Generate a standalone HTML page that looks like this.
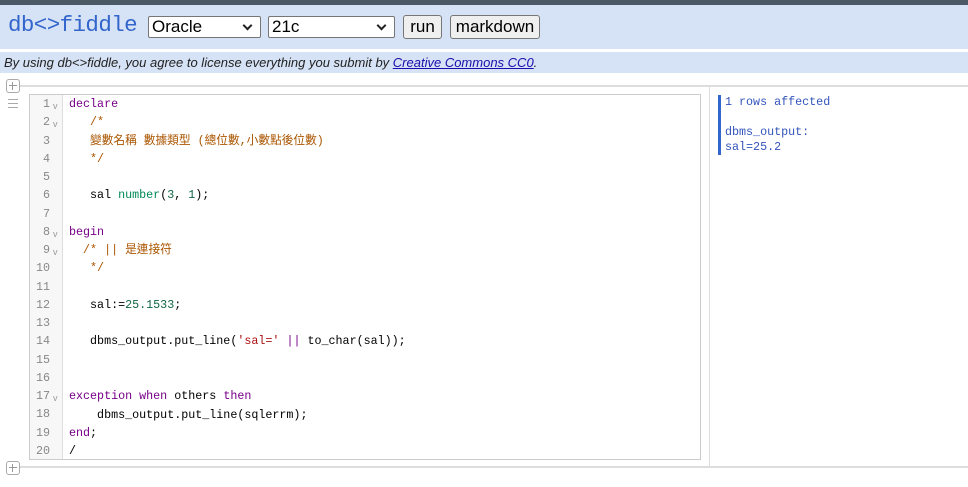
<!DOCTYPE html>
<html><head><meta charset="utf-8"><style>
body{margin:0;width:968px;height:487px;background:#fff;font-family:"Liberation Sans",sans-serif;position:relative;overflow:hidden}
.top{position:absolute;left:0;top:0;width:968px;height:5px;background:#4b5966}
.hdr{position:absolute;left:0;top:5px;width:968px;height:44px;background:#d6e2f5}
.logo{position:absolute;left:8px;top:12px;font-family:"Liberation Mono",monospace;font-size:22.5px;color:#3366cc;letter-spacing:-0.6px}
.sel{position:absolute;top:16px;height:22px;border:1px solid #767676;background:#fff;font-size:17px;box-sizing:border-box;padding-left:3px;line-height:20px;color:#000;border-radius:2px}
.sel:after{content:"";position:absolute;right:9px;top:5px;width:5px;height:5px;border-right:2px solid #222;border-bottom:2px solid #222;transform:rotate(45deg)}
.btn{position:absolute;top:15px;height:24px;border:1px solid #767676;background:#efefef;border-radius:3px;font-size:17px;line-height:22px;text-align:center;box-sizing:border-box;color:#000}
.note{position:absolute;left:0;top:52px;width:968px;height:21px;background:#d6e2f5;font-size:13px;font-style:italic;line-height:21px;padding-left:4px;color:#222;box-sizing:border-box}
.note a{color:#1a0dab;text-decoration:underline}
.hl{position:absolute;left:20px;height:2px;background:#ddd}
.plus{position:absolute;left:6px;width:12px;height:12px;border:1px solid #aaa;border-radius:3px;color:#999}
.plus:before{content:"";position:absolute;left:2px;top:5px;width:8px;height:1px;background:#999}
.plus:after{content:"";position:absolute;left:5px;top:2px;width:1px;height:8px;background:#999}
.ham{position:absolute;left:8px;top:99px;width:10px}
.ham i{display:block;height:1px;background:#aaa;margin-bottom:3px}
.ed{position:absolute;left:29px;top:94px;width:672px;height:366px;border:1px solid #ccc;box-sizing:border-box}
.gut{position:absolute;left:0;top:0;width:32px;height:100%;background:#f7f7f7;border-right:1px solid #ddd}
.code{position:absolute;left:0;top:0;font-family:"Liberation Mono","Noto Sans CJK TC",monospace;font-size:11.7px;line-height:18.26px;white-space:pre}
.ln{position:absolute;left:0;width:20px;text-align:right;color:#888;font-family:"Liberation Mono",monospace;font-size:11.7px;line-height:18.26px}
.fd{position:absolute;left:23px;color:#999;font-size:9px;line-height:22px}
.k{color:#708}.c{color:#a50}.n{color:#164}.t{color:#085}.s{color:#a11}.o{color:#708}
.vr{position:absolute;left:709px;top:87px;width:1px;height:380px;background:#ddd}
.out{position:absolute;left:718px;top:95px;border-left:3px solid #3366cc;padding-left:4px;font-family:"Liberation Mono",monospace;font-size:11.7px;line-height:15px;color:#3355bb;white-space:pre}
</style></head><body>
<div class="top"></div>
<div class="hdr"></div>
<div class="logo">db&lt;&gt;fiddle</div>
<div class="sel" style="left:148px;width:113px">Oracle</div>
<div class="sel" style="left:268px;width:127px">21c</div>
<div class="btn" style="left:403px;width:39px">run</div>
<div class="btn" style="left:450px;width:90px">markdown</div>
<div class="note">By using db&lt;&gt;fiddle, you agree to license everything you submit by <a>Creative Commons CC0</a>.</div>
<div class="plus" style="top:79px"></div>
<div class="hl" style="top:85px;width:948px"></div>
<div class="ham"><i></i><i></i><i></i></div>
<div class="ed">
<div class="gut">
<div class="ln" style="top:0">1</div><div class="fd" style="top:0">v</div>
<div class="ln" style="top:18.26px">2</div><div class="fd" style="top:18.26px">v</div>
<div class="ln" style="top:36.52px">3</div>
<div class="ln" style="top:54.78px">4</div>
<div class="ln" style="top:73.04px">5</div>
<div class="ln" style="top:91.3px">6</div>
<div class="ln" style="top:109.56px">7</div>
<div class="ln" style="top:127.82px">8</div><div class="fd" style="top:127.82px">v</div>
<div class="ln" style="top:146.08px">9</div><div class="fd" style="top:146.08px">v</div>
<div class="ln" style="top:164.34px">10</div>
<div class="ln" style="top:182.6px">11</div>
<div class="ln" style="top:200.86px">12</div>
<div class="ln" style="top:219.12px">13</div>
<div class="ln" style="top:237.38px">14</div>
<div class="ln" style="top:255.64px">15</div>
<div class="ln" style="top:273.9px">16</div>
<div class="ln" style="top:292.16px">17</div><div class="fd" style="top:292.16px">v</div>
<div class="ln" style="top:310.42px">18</div>
<div class="ln" style="top:328.68px">19</div>
<div class="ln" style="top:346.94px">20</div>
</div>
<div class="code" style="left:39px"><span class="k">declare</span>
   <span class="c">/*</span>
   <span class="c">變數名稱 數據類型 (總位數,小數點後位數)</span>
   <span class="c">*/</span>

   sal <span class="t">number</span>(<span class="n">3</span>, <span class="n">1</span>);

<span class="k">begin</span>
  <span class="c">/* || 是連接符</span>
  <span class="c"> */</span>

   sal:=<span class="n">25.1533</span>;

   dbms_output.put_line(<span class="s">'sal='</span> <span class="o">||</span> to_char(sal));


<span class="k">exception</span> <span class="k">when</span> others <span class="k">then</span>
    dbms_output.put_line(sqlerrm);
<span class="k">end</span>;
/</div>
</div>
<div class="vr"></div>
<div class="out">1 rows affected

dbms_output:
sal=25.2</div>
<div class="plus" style="top:461px"></div>
<div class="hl" style="top:466px;width:948px"></div>
</body></html>
